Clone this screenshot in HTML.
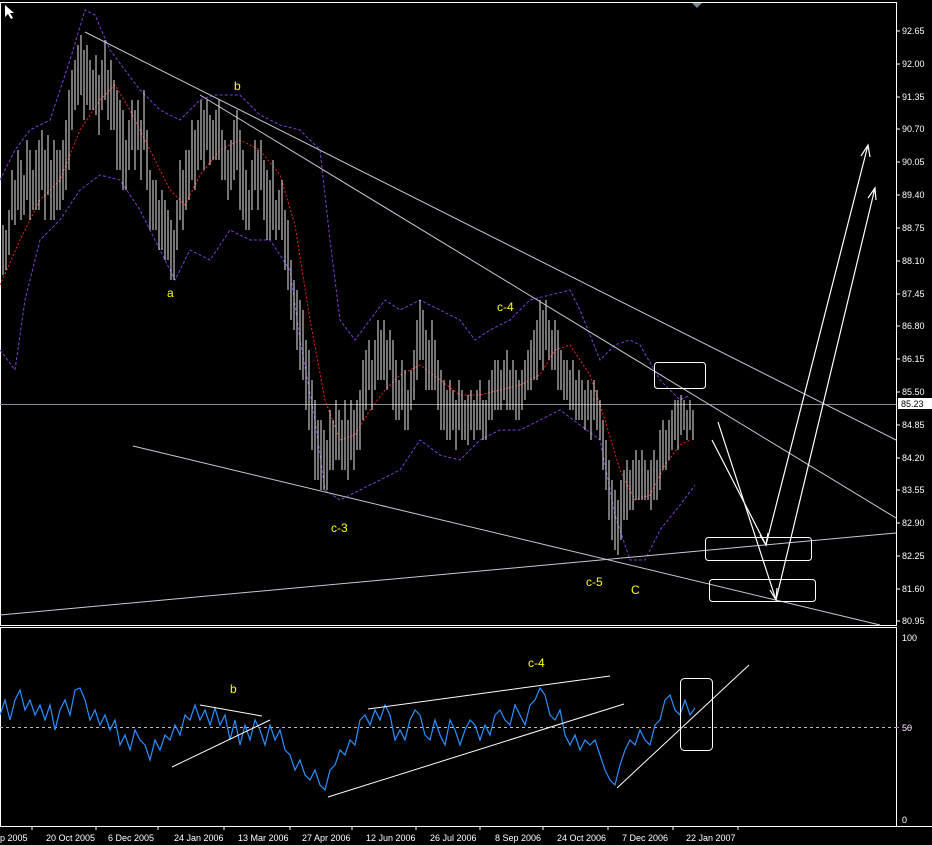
<!DOCTYPE html>
<html><head><meta charset="utf-8"><style>
html,body{margin:0;padding:0;background:#000;width:932px;height:845px;overflow:hidden}
svg{display:block}
text{font-family:"Liberation Sans",sans-serif}
</style></head><body>
<svg width="932" height="845" viewBox="0 0 932 845" xmlns="http://www.w3.org/2000/svg">
<rect width="932" height="845" fill="#000"/>
<rect x="0.5" y="2.5" width="896" height="623" fill="none" stroke="#fff"/>
<rect x="0.5" y="627.5" width="896" height="199" fill="none" stroke="#fff"/>
<line x1="0" y1="826.5" x2="932" y2="826.5" stroke="#fff"/>
<path d="M5 5 L5 17 L8 14 L11 19 L13 18 L10 13 L14 13 Z" fill="#fff"/>
<path d="M692 3 L702 3 L697 8Z" fill="#789"/>
<g fill="#fff" font-size="9" font-family="Liberation Sans">
<text x="902" y="34">92.65</text><text x="902" y="67">92.00</text><text x="902" y="100">91.35</text><text x="902" y="132">90.70</text><text x="902" y="165">90.05</text><text x="902" y="198">89.40</text><text x="902" y="231">88.75</text><text x="902" y="264">88.10</text><text x="902" y="297">87.45</text><text x="902" y="329">86.80</text><text x="902" y="362">86.15</text><text x="902" y="395">85.50</text><text x="902" y="428">84.85</text><text x="902" y="461">84.20</text><text x="902" y="493">83.55</text><text x="902" y="526">82.90</text><text x="902" y="559">82.25</text><text x="902" y="592">81.60</text><text x="902" y="624">80.95</text>
<text x="902" y="641">100</text><text x="902" y="731">50</text><text x="902" y="823">0</text>
</g>
<g stroke="#fff"><path d="M896 31h4M896 64h4M896 97h4M896 129h4M896 162h4M896 195h4M896 228h4M896 261h4M896 294h4M896 326h4M896 359h4M896 392h4M896 425h4M896 458h4M896 490h4M896 523h4M896 556h4M896 589h4M896 621h4"/></g>
<rect x="898" y="398" width="34" height="11" fill="#fff"/>
<text x="901" y="407" font-size="9" fill="#000">85.23</text>
<line x1="0" y1="404.5" x2="896" y2="404.5" stroke="#8a8f9a"/>
<polyline fill="none" stroke="#7a3fd6" stroke-dasharray="3,2" points="0,180 15,150 30,130 50,120 70,60 85,10 95,15 110,50 125,70 140,90 160,110 180,120 200,100 215,95 240,95 260,115 280,125 300,130 320,150 330,240 340,320 355,340 370,320 385,300 400,310 420,300 440,310 460,320 475,340 490,330 510,320 530,300 550,295 570,290 580,310 600,360 615,345 630,340 640,345 660,380 680,400 690,395"/>
<polyline fill="none" stroke="#7a3fd6" stroke-dasharray="3,2" points="0,350 15,370 25,300 40,240 60,220 80,190 100,175 120,180 140,210 160,250 175,280 190,250 210,260 230,230 250,240 270,240 290,270 300,340 315,420 325,490 340,500 360,490 380,480 400,470 420,440 440,455 460,460 480,440 500,430 520,430 540,420 560,410 580,425 600,440 615,515 630,560 645,560 660,530 680,505 695,485"/>
<polyline fill="none" stroke="#e22" stroke-dasharray="2,2" points="0,285 20,240 40,200 60,180 80,130 100,100 115,85 130,110 150,150 170,190 185,205 200,175 220,150 240,140 260,150 280,175 295,225 310,320 325,400 340,440 355,435 370,410 385,390 400,375 420,365 440,380 460,395 480,395 500,390 520,385 540,375 555,350 570,345 590,375 605,420 620,470 635,500 650,495 665,465 680,445 690,440"/>
<g stroke="#e8e8e8" stroke-width="1">
<path d="M0 240v40M3 225v50M6 230v40M9 210v45M12 170v50M15 180v45M18 150v60M21 160v60M24 175v40M27 140v60M30 150v70M33 170v40M36 150v60M39 140v70M42 130v60M45 150v70M48 135v60M51 160v60M54 140v80M57 150v60M60 150v60M63 140v60M66 120v70M69 90v80M72 70v60M75 60v50M78 45v60M81 35v60M84 50v70M87 45v60M90 60v50M93 70v40M96 55v60M99 75v60M102 60v50M105 40v60M108 70v50M111 60v70M114 80v50M117 90v80M120 100v70M123 110v80M126 140v50M129 120v50M132 100v50M135 110v60M138 100v50M141 120v60M144 90v60M147 130v60M150 170v60M153 180v50M156 180v50M159 200v50M162 190v60M165 200v60M168 210v50M171 220v60M174 230v50M177 200v50M180 160v60M183 170v60M186 150v60M189 150v50M192 120v60M195 130v60M198 120v50M201 100v60M204 110v60M207 100v50M210 115v50M213 120v40M216 110v50M219 100v60M222 130v50M225 140v40M228 150v50M231 140v50M234 120v60M237 110v60M240 130v80M243 150v70M246 170v60M249 190v40M252 160v50M255 140v50M258 150v60M261 140v50M264 160v60M267 170v70M270 180v60M273 160v70M276 200v40M279 190v40M282 180v60M285 210v60M288 220v70M291 260v60M294 280v50M297 290v60M300 300v70M303 310v70M306 340v70M309 350v80M312 380v70M315 400v80M318 420v60M321 420v70M324 430v60M327 440v50M330 410v60M333 420v50M336 400v60M339 410v50M342 420v50M345 400v70M348 420v60M351 400v60M354 410v60M357 400v50M360 390v60M363 360v60M366 350v60M369 340v50M372 360v50M375 340v50M378 320v60M381 330v50M384 320v60M387 340v50M390 330v40M393 340v70M396 360v60M399 380v40M402 360v50M405 370v60M408 390v40M411 370v40M414 350v50M417 320v60M420 300v60M423 310v50M426 330v60M429 340v50M432 320v70M435 340v50M438 360v50M441 370v60M444 380v50M447 390v50M450 380v60M453 390v40M456 400v50M459 380v50M462 390v50M465 400v40M468 395v50M471 390v40M474 400v40M477 390v40M480 380v50M483 400v40M486 400v40M489 380v40M492 370v50M495 360v50M498 360v50M501 370v40M504 360v40M507 350v60M510 370v40M513 360v50M516 370v50M519 380v40M522 370v40M525 360v40M528 350v40M531 340v50M534 330v50M537 320v60M540 300v60M543 310v60M546 300v50M549 320v40M552 330v40M555 320v50M558 330v60M561 350v40M564 360v40M567 360v40M570 370v40M573 360v50M576 380v40M579 370v50M582 380v40M585 390v40M588 380v40M591 390v50M594 380v40M597 390v40M600 400v40M603 420v50M606 440v50M609 460v60M612 480v60M615 490v60M618 500v55M621 480v60M624 470v50M627 460v60M630 470v40M633 460v50M636 450v50M639 460v40M642 450v50M645 460v40M648 470v30M651 460v50M654 450v50M657 460v40M660 430v60M663 420v50M666 430v40M669 420v40M672 410v40M675 400v40M678 400v50M681 395v40M684 400v30M687 410v30M690 400v30M693 410v30"/>
</g>
<g stroke="#c8c8d8" stroke-width="1" fill="none">
<line x1="85" y1="32" x2="896" y2="440"/>
<line x1="200" y1="95" x2="896" y2="518"/>
<line x1="133" y1="446" x2="880" y2="625"/>
<line x1="0" y1="615" x2="896" y2="533"/>
</g>
<g stroke="#fff" fill="none">
<rect x="654.5" y="362.5" width="51" height="26" rx="3"/>
<rect x="705.5" y="537.5" width="106" height="23" rx="3"/>
<rect x="709.5" y="579.5" width="106" height="22" rx="3"/>
</g>
<g stroke="#fff" fill="none" stroke-width="1.2">
<path d="M712 440 L766 545 M760 535 L766 545 L768 533"/>
<path d="M718 422 L776 600 M770 590 L776 600 L777 588"/>
<path d="M776 600 L875 188 M868 198 L875 188 L876 200"/>
<path d="M766 545 L868 145 M861 156 L868 145 L870 157"/>
</g>
<g fill="#ff0" font-size="12" font-family="Liberation Mono,monospace">
<text x="234" y="90">b</text><text x="167" y="297">a</text><text x="497" y="311">c-4</text><text x="331" y="532">c-3</text><text x="586" y="586">c-5</text><text x="631" y="594">C</text>
<text x="230" y="693">b</text><text x="528" y="667">c-4</text>
</g>
<line x1="0" y1="727.5" x2="896" y2="727.5" stroke="#bbb" stroke-dasharray="3,3"/>
<line x1="896" y1="727.5" x2="912" y2="727.5" stroke="#c6c" stroke-dasharray="3,3"/>
<polyline fill="none" stroke="#2a8fff" stroke-width="1.2" points="0,715 5,700 10,720 15,700 20,690 25,710 30,700 35,715 40,705 45,720 50,705 55,730 60,710 65,700 70,715 75,690 80,688 85,700 90,720 95,710 100,725 105,715 110,730 115,720 120,745 125,735 130,750 135,730 140,740 145,745 150,760 155,740 160,750 165,735 170,740 175,725 180,735 185,715 190,720 195,705 200,720 205,710 210,725 215,708 220,725 225,715 230,740 235,720 240,745 245,725 250,740 255,720 260,730 265,745 270,725 275,740 280,730 285,750 290,755 295,770 300,760 305,775 310,780 315,770 320,785 325,790 330,770 335,765 340,750 345,755 350,740 355,745 360,720 365,715 370,725 375,710 380,720 385,705 390,715 395,740 400,730 405,740 410,720 415,710 420,715 425,735 430,740 435,720 440,735 445,745 450,720 455,730 460,745 465,730 470,720 475,725 480,740 485,725 490,735 495,715 500,710 505,720 510,725 515,705 520,715 525,725 530,705 535,700 540,688 545,695 550,715 555,720 560,710 565,735 570,745 575,735 580,750 585,740 590,745 595,740 600,755 605,770 610,780 615,785 620,765 625,750 630,740 635,745 640,730 645,740 650,745 655,725 660,720 665,700 670,695 675,710 680,715 685,700 690,715 695,708"/>
<g stroke="#fff" fill="none">
<line x1="172" y1="767" x2="270" y2="720"/>
<line x1="200" y1="705" x2="262" y2="716"/>
<line x1="328" y1="797" x2="624" y2="704"/>
<line x1="368" y1="709" x2="610" y2="676"/>
<line x1="617" y1="788" x2="749" y2="665"/>
<rect x="680.5" y="678.5" width="32" height="72" rx="4"/>
</g>
<g fill="#fff" font-size="9">
<text x="0" y="841">p 2005</text><text x="46" y="841">20 Oct 2005</text><text x="108" y="841">6 Dec 2005</text><text x="174" y="841">24 Jan 2006</text><text x="238" y="841">13 Mar 2006</text><text x="302" y="841">27 Apr 2006</text><text x="366" y="841">12 Jun 2006</text><text x="430" y="841">26 Jul 2006</text><text x="495" y="841">8 Sep 2006</text><text x="557" y="841">24 Oct 2006</text><text x="622" y="841">7 Dec 2006</text><text x="686" y="841">22 Jan 2007</text>
</g>
<g stroke="#fff"><path d="M32 826v4M96 826v4M158 826v4M224 826v4M290 826v4M352 826v4M416 826v4M480 826v4M543 826v4M608 826v4M673 826v4M738 826v4"/></g>
</svg>
</body></html>
